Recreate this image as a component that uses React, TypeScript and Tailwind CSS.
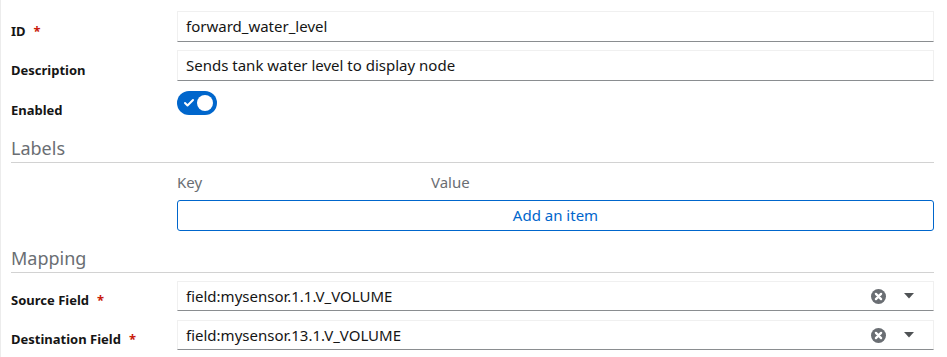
import { Check } from "lucide-react";

const font = { fontFamily: '"Noto Sans", "Open Sans", sans-serif' };

function Required() {
  return <span className="ml-2 text-[#c9190b]">*</span>;
}

function FieldLabel({ text, required }: { text: string; required?: boolean }) {
  return (
    <div className="flex h-full items-end pb-[1px] text-[13px] font-bold text-[#151515]">
      <span>{text}</span>
      {required ? <Required /> : null}
    </div>
  );
}

function TextInput({ value }: { value: string }) {
  return (
    <div className="flex h-[31px] items-center border border-[#f0f0f0] border-b-[#8a8d90] bg-white px-2 text-[15px] text-[#151515]">
      {value}
    </div>
  );
}

function ClearIcon() {
  return (
    <svg width="15" height="15" viewBox="0 0 14 14" aria-hidden="true">
      <circle cx="7" cy="7" r="7" fill="#6a6e73" />
      <path d="M4.6 4.6 L9.4 9.4 M9.4 4.6 L4.6 9.4" stroke="#fff" strokeWidth="2.2" strokeLinecap="round" />
    </svg>
  );
}

function Caret() {
  return (
    <svg width="10" height="6" viewBox="0 0 10 6" aria-hidden="true">
      <path d="M0 0 H10 L5 5.5 Z" fill="#4f5255" />
    </svg>
  );
}

function Typeahead({ value }: { value: string }) {
  return (
    <div className="flex h-[30px] items-center border border-[#f0f0f0] border-b-[#8a8d90] bg-white pl-2 pr-[19px] text-[15px] text-[#151515]">
      <span className="flex-1">{value}</span>
      <ClearIcon />
      <span className="ml-[18px] flex items-center">
        <Caret />
      </span>
    </div>
  );
}

function SectionTitle({ text }: { text: string }) {
  return (
    <div className="border-b border-[#d2d2d2] pb-[2px] text-[18px] leading-6 text-[#6a6e73]">{text}</div>
  );
}

export default function App() {
  return (
    <div className="h-[357px] w-[947px] border-l border-[#ececec] bg-white pl-[10px] pr-[13px]" style={font}>
      <div className="grid grid-cols-[166px_1fr] gap-y-[8px] pt-[11px]">
        <FieldLabel text="ID" required />
        <TextInput value="forward_water_level" />
        <FieldLabel text="Description" />
        <TextInput value="Sends tank water level to display node" />
        <div className="pt-[12px] text-[13px] leading-[18px] font-bold text-[#151515]">Enabled</div>
        <div className="mt-[2px]">
          <button
            type="button"
            className="flex h-6 w-10 items-center justify-between rounded-full bg-[#0066cc] pl-[6px] pr-[4px]"
          >
            <Check className="h-3 w-3 text-white" strokeWidth={4} aria-hidden="true" />
            <span className="h-4 w-4 rounded-full bg-white" />
          </button>
        </div>
      </div>

      <div className="mt-[17px]">
        <SectionTitle text="Labels" />
      </div>
      <div className="grid grid-cols-[166px_1fr]">
        <div />
        <div>
          <div className="grid grid-cols-[254px_1fr] pt-[9px] text-[15px] leading-5 text-[#6a6e73]">
            <span>Key</span>
            <span>Value</span>
          </div>
          <button
            type="button"
            className="mt-[8px] flex h-[31px] w-full items-center justify-center rounded-[3px] border border-[#0066cc] text-[15px] text-[#0066cc]"
          >
            Add an item
          </button>
        </div>
      </div>

      <div className="mt-[15px]">
        <SectionTitle text="Mapping" />
      </div>
      <div className="grid grid-cols-[166px_1fr] gap-y-[9px] pt-[8px]">
        <FieldLabel text="Source Field" required />
        <Typeahead value="field:mysensor.1.1.V_VOLUME" />
        <FieldLabel text="Destination Field" required />
        <Typeahead value="field:mysensor.13.1.V_VOLUME" />
      </div>
    </div>
  );
}
